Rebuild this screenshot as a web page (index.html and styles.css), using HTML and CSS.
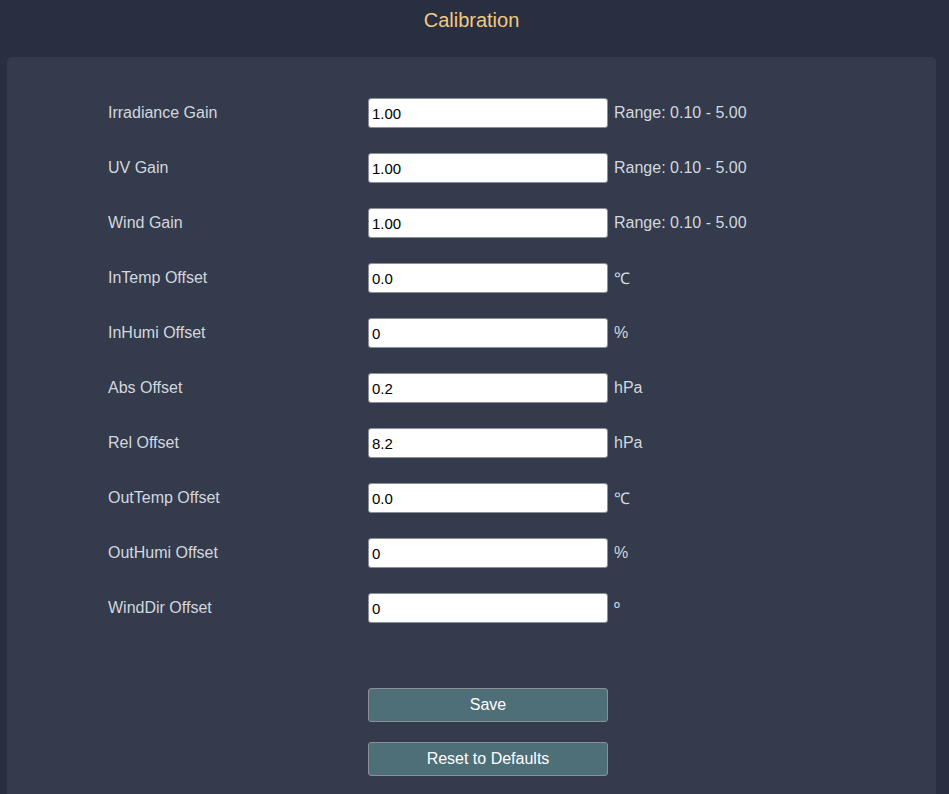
FILE: index.html
```html
<!DOCTYPE html>
<html lang="en">
<head>
  <meta charset="UTF-8" />
  <meta name="viewport" content="width=device-width, initial-scale=1.0"/>
  <title>Calibration</title>
  <link rel="stylesheet" href="styles.css">
</head>
<body>
  <div class="page">
    <h2 class="title">Calibration</h2>
    <div class="card">
      <form class="calib">
        <div class="row">
          <label for="irrGain">Irradiance Gain</label>
          <input type="text" id="irrGain" value="1.00">
          <span class="unit">Range: 0.10 - 5.00</span>
        </div>
        <div class="row">
          <label for="uvGain">UV Gain</label>
          <input type="text" id="uvGain" value="1.00">
          <span class="unit">Range: 0.10 - 5.00</span>
        </div>
        <div class="row">
          <label for="windGain">Wind Gain</label>
          <input type="text" id="windGain" value="1.00">
          <span class="unit">Range: 0.10 - 5.00</span>
        </div>
        <div class="row">
          <label for="inTemp">InTemp Offset</label>
          <input type="text" id="inTemp" value="0.0">
          <span class="unit">℃</span>
        </div>
        <div class="row">
          <label for="inHumi">InHumi Offset</label>
          <input type="text" id="inHumi" value="0">
          <span class="unit">%</span>
        </div>
        <div class="row">
          <label for="absOff">Abs Offset</label>
          <input type="text" id="absOff" value="0.2">
          <span class="unit">hPa</span>
        </div>
        <div class="row">
          <label for="relOff">Rel Offset</label>
          <input type="text" id="relOff" value="8.2">
          <span class="unit">hPa</span>
        </div>
        <div class="row">
          <label for="outTemp">OutTemp Offset</label>
          <input type="text" id="outTemp" value="0.0">
          <span class="unit">℃</span>
        </div>
        <div class="row">
          <label for="outHumi">OutHumi Offset</label>
          <input type="text" id="outHumi" value="0">
          <span class="unit">%</span>
        </div>
        <div class="row">
          <label for="windDir">WindDir Offset</label>
          <input type="text" id="windDir" value="0">
          <span class="unit">º</span>
        </div>

        <div class="buttons">
          <button type="button" class="btn">Save</button>
          <button type="button" class="btn">Reset to Defaults</button>
        </div>
      </form>
    </div>
  </div>
</body>
</html>
```

FILE: styles.css
```css
html, body { margin: 0; padding: 0; background: #272f40; }
body { font-family: Arial, "Liberation Sans", sans-serif; color: #d3d7de; overflow: hidden; }
.page { margin: 0 13px 0 7px; }
.title { margin: 0; height: 57px; line-height: 40px; font-size: 20px; font-weight: normal; text-align: center; color: #f3c981; }
.card { background: #343b4d; border-radius: 5px 5px 0 0; padding: 41px 0 20px 101px; min-height: 700px; }
.row { display: flex; align-items: center; height: 30px; margin-bottom: 25px; }
.row label { width: 260px; font-size: 16px; }
.row input { box-sizing: border-box; width: 240px; height: 30px; margin: 0; padding: 0 3px; border: 1px solid #8a8f99; border-radius: 3px; background: #fff; color: #000; font-family: Arial, "Liberation Sans", sans-serif; font-size: 15px; }
.row .unit { margin-left: 6px; font-size: 16px; }
.buttons { display: flex; flex-direction: column; gap: 20px; margin: 65px 0 0 260px; width: 240px; }
.btn { box-sizing: border-box; width: 240px; height: 34px; background: #4e6e78; border: 1px solid #8a8f99; border-radius: 3px; color: #fff; font-family: Arial, "Liberation Sans", sans-serif; font-size: 16px; }
```
